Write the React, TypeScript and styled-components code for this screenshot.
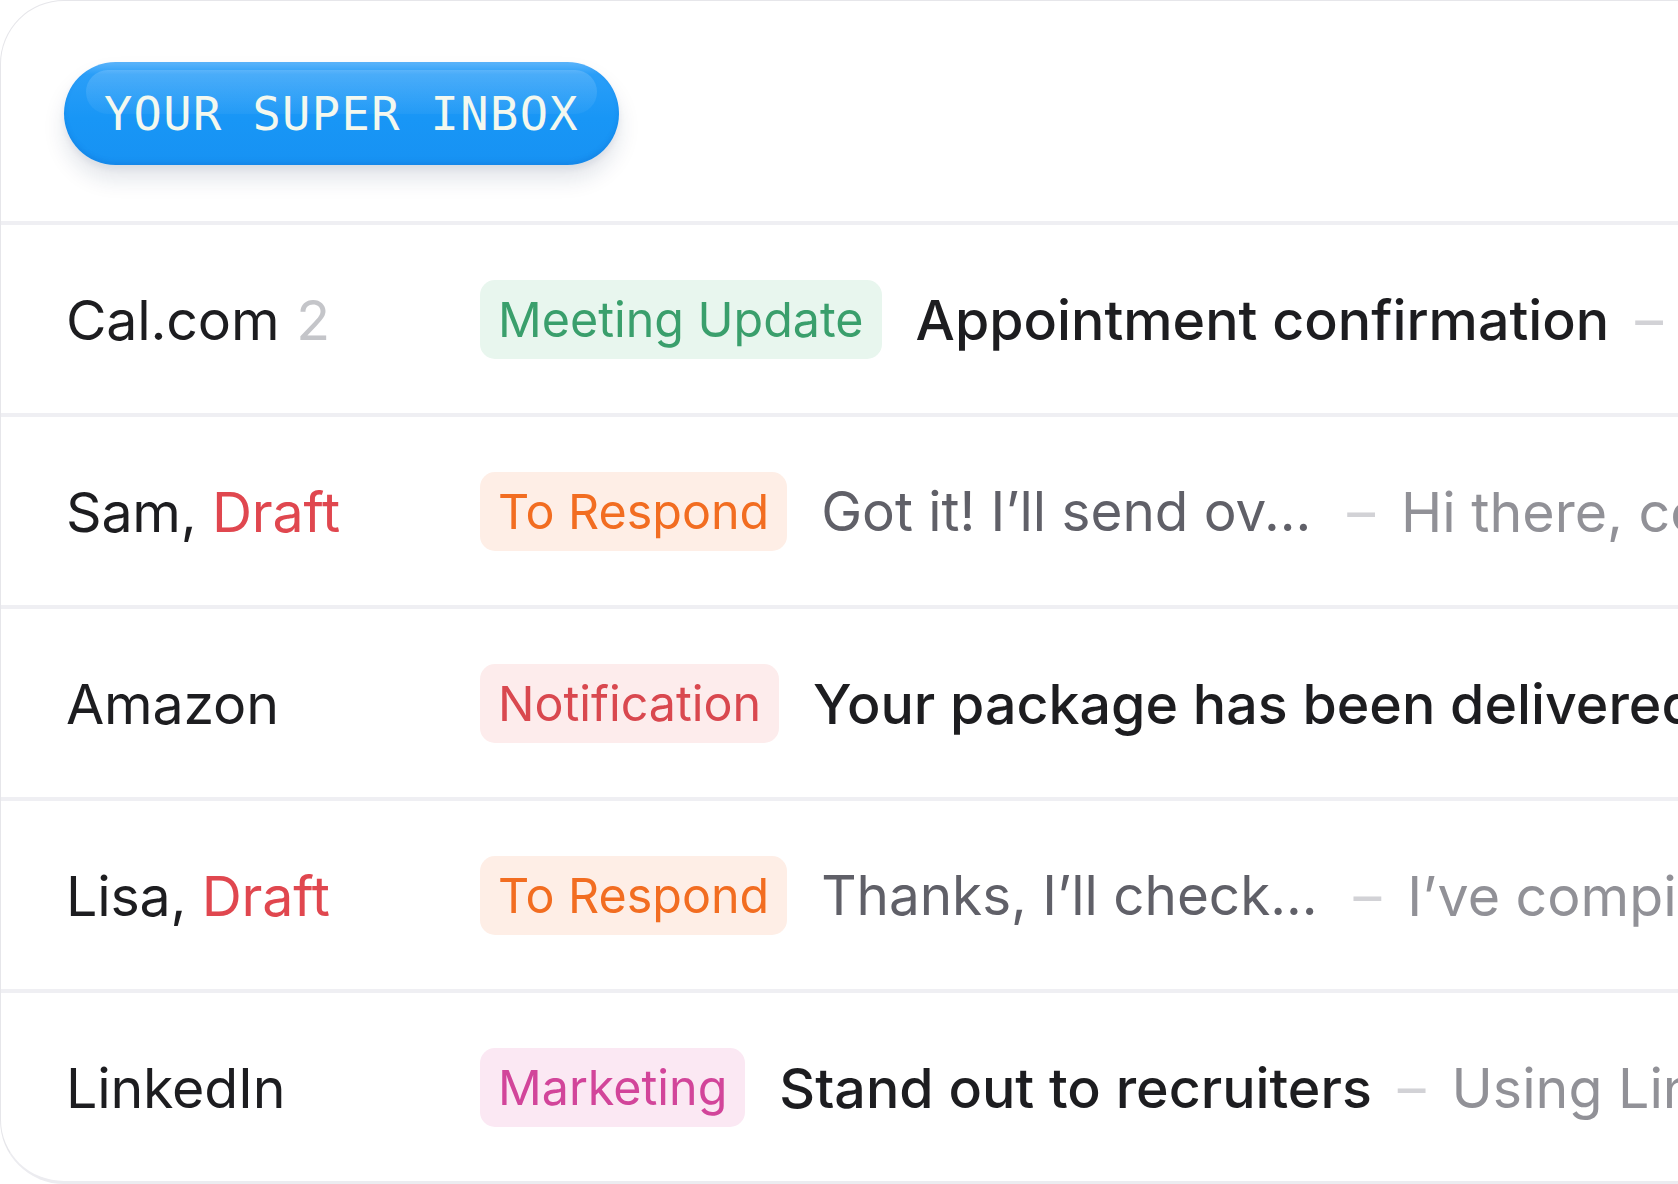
import React from 'react';
import styled, { createGlobalStyle } from 'styled-components';

type Tone = 'green' | 'orange' | 'red' | 'pink';

type Mail = {
	sender: string;
	count?: number;
	draft?: boolean;
	tag: string;
	tone: Tone;
	subject: string;
	preview?: boolean;
	snippet?: string;
};

const tones: Record<Tone, { fg: string; bg: string }> = {
	green: { fg: '#3a9f6c', bg: '#e8f6ee' },
	orange: { fg: '#f26d21', bg: '#feeee6' },
	red: { fg: '#d9484f', bg: '#fdecec' },
	pink: { fg: '#d2459a', bg: '#fbe8f3' },
};

const mails: Mail[] = [
	{
		sender: 'Cal.com',
		count: 2,
		tag: 'Meeting Update',
		tone: 'green',
		subject: 'Appointment confirmation',
		snippet: 'Your meeting has been scheduled',
	},
	{
		sender: 'Sam',
		draft: true,
		tag: 'To Respond',
		tone: 'orange',
		subject: 'Got it! I’ll send ov...',
		preview: true,
		snippet: 'Hi there, could you send over the files',
	},
	{
		sender: 'Amazon',
		tag: 'Notification',
		tone: 'red',
		subject: 'Your package has been delivered',
		snippet: 'Your order has arrived',
	},
	{
		sender: 'Lisa',
		draft: true,
		tag: 'To Respond',
		tone: 'orange',
		subject: 'Thanks, I’ll check...',
		preview: true,
		snippet: 'I’ve compiled the report for this week',
	},
	{
		sender: 'LinkedIn',
		tag: 'Marketing',
		tone: 'pink',
		subject: 'Stand out to recruiters',
		snippet: 'Using LinkedIn Premium',
	},
];

export default function App() {
	return (
		<>
			<GlobalStyle />
			<Page>
				<Card>
					<Header>
						<Pill>
							<PillText>YOUR SUPER INBOX</PillText>
						</Pill>
					</Header>
					{mails.map((mail, i) => (
						<Row key={i}>
							<Sender>
								{mail.sender}
								{mail.count !== undefined && <Count>{mail.count}</Count>}
								{mail.draft && (
									<>
										, <Draft>Draft</Draft>
									</>
								)}
							</Sender>
							<Tag tone={mail.tone}>{mail.tag}</Tag>
							<Line>
								<Subject preview={mail.preview}>{mail.subject}</Subject>
								<Dash>–</Dash>
								<Snippet>{mail.snippet}</Snippet>
							</Line>
						</Row>
					))}
				</Card>
			</Page>
		</>
	);
}

const GlobalStyle = createGlobalStyle`
	html, body {
		margin: 0;
		padding: 0;
		background: #ffffff;
		overflow: hidden;
	}
	body {
		font-family: Inter, "Noto Sans", sans-serif;
		-webkit-font-smoothing: antialiased;
	}
`;

const Page = styled.div`
	width: 1678px;
	height: 1184px;
	overflow: hidden;
`;

const Card = styled.div`
	width: 1900px;
	display: flex;
	flex-direction: column;
	background: #ffffff;
	border: 1px solid #e6e6ea;
	border-bottom: 3px solid #ececf0;
	border-radius: 64px;
	overflow: hidden;
`;

const Header = styled.div`
	height: 220px;
	display: flex;
	align-items: center;
	padding-left: 63px;
	padding-top: 4px;
	box-sizing: border-box;
`;

const Pill = styled.div`
	position: relative;
	width: 555px;
	height: 103px;
	border-radius: 52px;
	display: flex;
	align-items: center;
	justify-content: center;
	background: linear-gradient(180deg, #5cb5fb 0%, #2a9ef8 12%, #1896f6 55%, #1792f3 100%);
	box-shadow:
		0 14px 22px rgba(20, 40, 80, 0.12),
		0 4px 6px rgba(20, 40, 80, 0.06),
		inset 0 -3px 4px rgba(10, 100, 200, 0.25);

	&::before {
		content: '';
		position: absolute;
		left: 22px;
		right: 22px;
		top: 8px;
		height: 44px;
		border-radius: 30px;
		background: linear-gradient(180deg, rgba(255, 255, 255, 0.16), rgba(255, 255, 255, 0.04));
	}
`;

const PillText = styled.span`
	position: relative;
	font-family: "DejaVu Sans Mono", "Liberation Mono", monospace;
	font-size: 47px;
	letter-spacing: 1.4px;
	color: #f3f8ef;
	line-height: 1;
`;

const Row = styled.div`
	height: 188px;
	border-top: 4px solid #efeff3;
	display: flex;
	align-items: center;
	padding-left: 65px;
	white-space: nowrap;
	font-size: 55.5px;
`;

const Sender = styled.div`
	width: 414px;
	flex-shrink: 0;
	color: #1d1d20;
	font-size: 55.5px;
	font-weight: 400;
	letter-spacing: -0.2px;
`;

const Count = styled.span`
	color: #c4c5c9;
	margin-left: 17px;
`;

const Draft = styled.span`
	color: #e0474f;
`;

const Tag = styled.div<{ tone: Tone }>`
	height: 79px;
	padding: 0 18px;
	display: flex;
	align-items: center;
	border-radius: 15px;
	color: ${(p) => tones[p.tone].fg};
	background: ${(p) => tones[p.tone].bg};
	font-size: 48.4px;
	flex-shrink: 0;
`;

const Line = styled.div`
	display: flex;
	align-items: center;
	margin-left: 34px;
	gap: 26px;
`;

const Subject = styled.span<{ preview?: boolean }>`
	color: ${(p) => (p.preview ? '#606068' : '#1d1d20')};
	font-weight: ${(p) => (p.preview ? 400 : 500)};
	font-size: ${(p) => (p.preview ? '54.8px' : '55.5px')};
	padding-right: ${(p) => (p.preview ? '10px' : '0')};
`;

const Dash = styled.span`
	color: #d2d2d6;
`;

const Snippet = styled.span`
	color: #919197;
`;
